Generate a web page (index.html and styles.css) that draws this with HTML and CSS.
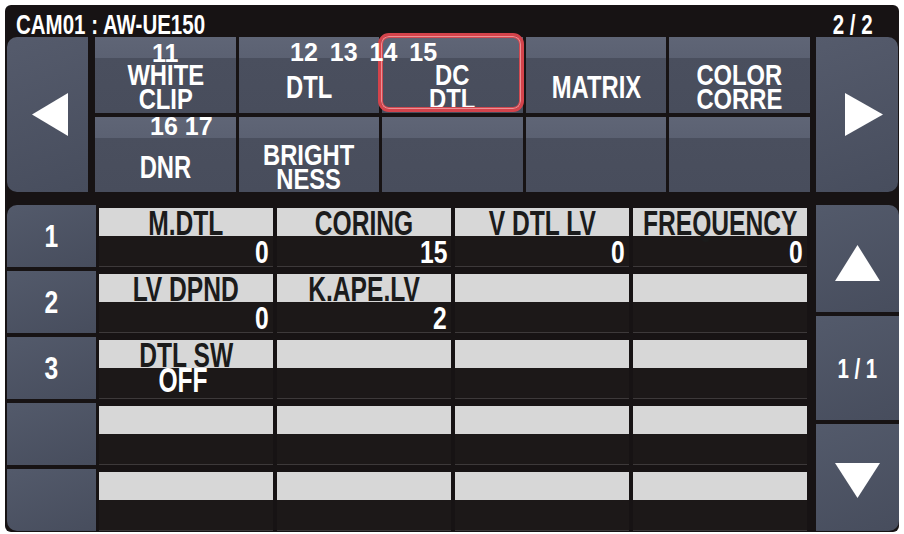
FILE: index.html
```html
<!DOCTYPE html>
<html lang="en">
<head>
    <meta charset="UTF-8">
    <title>CAM01 : AW-UE150</title>
    <link rel="stylesheet" href="styles.css">
</head>
<body>
    <div class="screen">
        <div class="topbar">
            <span class="t cam">CAM01 : AW-UE150</span>
            <span class="t page">2 / 2</span>
        </div>

        <div class="menu">
            <div class="nav nav-left">
                <svg width="36" height="43" viewBox="0 0 36 43"><polygon points="0,21.5 36,0 36,43" fill="#fff"/></svg>
            </div>
            <div class="menu-grid">
                <div class="mbtn"><div class="mlabel two"><span class="t">WHITE<br>CLIP</span></div></div>
                <div class="mbtn"><div class="mlabel"><span class="t">DTL</span></div></div>
                <div class="mbtn sel"><div class="mlabel two"><span class="t">DC<br>DTL</span></div></div>
                <div class="mbtn"><div class="mlabel"><span class="t">MATRIX</span></div></div>
                <div class="mbtn"><div class="mlabel two"><span class="t">COLOR<br>CORRE</span></div></div>
                <div class="mbtn"><div class="mlabel"><span class="t">DNR</span></div></div>
                <div class="mbtn"><div class="mlabel two"><span class="t">BRIGHT<br>NESS</span></div></div>
                <div class="mbtn"></div>
                <div class="mbtn"></div>
                <div class="mbtn"></div>
            </div>
            <div class="nav nav-right">
                <svg width="38" height="43" viewBox="0 0 38 43"><polygon points="0,0 38,21.5 0,43" fill="#fff"/></svg>
            </div>

            <!-- callout numbers -->
            <span class="callout c11">11</span>
            <span class="callout c12">12 13 14 15</span>
            <span class="callout c16">16 17</span>
        </div>

        <div class="table">
            <div class="rownums">
                <div class="rownum"><span class="t">1</span></div>
                <div class="rownum"><span class="t">2</span></div>
                <div class="rownum"><span class="t">3</span></div>
                <div class="rownum"></div>
                <div class="rownum"></div>
            </div>

            <div class="cells" id="cells"></div>

            <div class="pager">
                <div class="pbtn up">
                    <svg width="45" height="36" viewBox="0 0 45 36"><polygon points="22.5,0 45,36 0,36" fill="#fff"/></svg>
                </div>
                <div class="pbtn count"><span class="t">1 / 1</span></div>
                <div class="pbtn down">
                    <svg width="45" height="35" viewBox="0 0 45 35"><polygon points="0,0 45,0 22.5,35" fill="#fff"/></svg>
                </div>
            </div>
        </div>
    </div>

    <script>
        // parameter rows: [label, value, align]
        const rows = [
            [['M.DTL', '0'], ['CORING', '15'], ['V DTL LV', '0'], ['FREQUENCY', '0']],
            [['LV DPND', '0'], ['K.APE.LV', '2'], null, null],
            [['DTL SW', 'OFF', 'center'], null, null, null],
            [null, null, null, null],
            [null, null, null, null]
        ];

        const cells = document.getElementById('cells');
        rows.forEach(row => {
            const r = document.createElement('div');
            r.className = 'row';
            row.forEach(item => {
                const c = document.createElement('div');
                c.className = 'cell';
                const label = item ? `<span class="t">${item[0]}</span>` : '';
                const value = item ? `<span class="t">${item[1]}</span>` : '';
                const align = item && item[2] === 'center' ? ' center' : '';
                c.innerHTML = `<div class="lbl">${label}</div><div class="val${align}">${value}</div>`;
                r.appendChild(c);
            });
            cells.appendChild(r);
        });
    </script>
</body>
</html>
```

FILE: styles.css
```css
body {
    margin: 0;
    background: #fff;
    font-family: "Liberation Sans", Arial, sans-serif;
    font-weight: bold;
}
.screen {
    position: relative;
    margin: 5px 0 0 5px;
    width: 894px;
    height: 527px;
    background: #171314;
    border-radius: 6px;
    overflow: hidden;
}
/* narrow, tall lettering like the camera panel font */
.t {
    display: inline-block;
    white-space: nowrap;
    transform: scale(0.82, 1.07);
    transform-origin: center;
}
.topbar {
    height: 32px;
    display: flex;
    justify-content: space-between;
    align-items: flex-end;
    padding: 0 26px 0 11px;
    color: #fff;
    font-size: 25px;
    line-height: 24px;
}
.topbar .t {
    transform: scale(0.82, 1.08);
}
.topbar .cam {
    transform-origin: left 83%;
}
.topbar .page {
    transform-origin: right 83%;
}

/* menu */
.menu {
    position: relative;
    display: flex;
    height: 155px;
    padding-left: 2px;
}
.nav {
    width: 81px;
    background: linear-gradient(160deg, #555b6c, #474d5d);
    display: flex;
    align-items: center;
    justify-content: center;
}
.nav-left {
    border-radius: 10px 0 0 10px;
    padding-left: 5px;
    box-sizing: border-box;
}
.nav-right {
    width: 82px;
    margin-left: 6px;
    border-radius: 0 10px 10px 0;
    padding-left: 14px;
    box-sizing: border-box;
}
.menu-grid {
    margin-left: 7px;
    width: 715px;
    display: grid;
    grid-template-columns: repeat(5, 1fr);
    grid-template-rows: 76px 75px;
    gap: 4px 3px;
}
.mbtn {
    position: relative;
    display: flex;
    flex-direction: column;
    padding-top: 21px;
    background: linear-gradient(#5f6576 0, #5b6172 21px, #4a4f5e 21px, #484d5c 100%);
    color: #fff;
}
.mlabel {
    flex: 1;
    display: flex;
    align-items: center;
    justify-content: center;
    text-align: center;
    padding-top: 3px;
    font-size: 29px;
    line-height: 26px;
}
.mlabel .t {
    transform: scale(0.82, 1.1);
}
.mlabel.two {
    line-height: 23px;
}
.mlabel.two .t {
    transform: scale(0.82, 1.03);
}
.mbtn.sel::after {
    content: "";
    position: absolute;
    top: -4px;
    left: -4px;
    right: -1px;
    bottom: 1px;
    border: 3px solid #d4434b;
    border-radius: 11px;
    box-shadow: inset 0 0 0 1px #ec9094, inset 0 0 0 2px #d24850;
}
.callout {
    position: absolute;
    font-size: 25px;
    line-height: 24px;
    color: #fff;
    word-spacing: 5px;
}
.c11 { top: 4px; left: 147px; }
.c12 { top: 3px; left: 285px; }
.c16 { top: 77px; left: 145px; word-spacing: 0; }

/* parameter table */
.table {
    display: flex;
    margin-top: 13px;
    height: 326px;
    padding-left: 2px;
}
.rownums {
    width: 89px;
    display: grid;
    grid-template-rows: repeat(5, 62px);
    gap: 4px;
}
.rownum {
    background: linear-gradient(160deg, #535a6b, #474d5d);
    color: #fff;
    display: flex;
    align-items: center;
    justify-content: center;
    font-size: 30px;
    line-height: 30px;
}
.rownum:first-child {
    border-top-left-radius: 10px;
}
.rownum:last-child {
    border-bottom-left-radius: 10px;
}
.cells {
    margin-left: 3px;
    width: 708px;
    display: grid;
    grid-template-rows: repeat(5, 62px);
    gap: 4px;
}
.row {
    display: grid;
    grid-template-columns: repeat(4, 1fr);
    gap: 4px;
    padding-top: 3px;
}
.cell {
    display: flex;
    flex-direction: column;
    min-width: 0;
}
.lbl {
    height: 28px;
    display: flex;
    justify-content: center;
    align-items: flex-start;
    background: #d7d7d7;
    color: #1b1b1b;
    font-size: 30px;
}
.lbl .t {
    line-height: 34px;
    transform: scale(0.82, 1.17);
    transform-origin: 50% 80.6%;
}
.val {
    height: 31px;
    box-sizing: border-box;
    background: #1c1818;
    border-bottom: 1px solid #3d393a;
    color: #fff;
    text-align: right;
    padding: 2px 4px 0 0;
    font-size: 30px;
    line-height: 28px;
}
.val .t {
    line-height: 30px;
    transform-origin: right 85%;
}
.val.center {
    text-align: center;
    padding: 0 7px 0 0;
}
.val.center .t {
    margin-top: -2px;
    transform: scale(0.82, 1.16);
    transform-origin: center 85%;
}
.pager {
    margin-left: 9px;
    width: 83px;
    display: grid;
    grid-template-rows: 107px 104px 107px;
    gap: 4px;
}
.pbtn {
    background: linear-gradient(160deg, #535a6b, #474d5d);
    color: #fff;
    display: flex;
    align-items: center;
    justify-content: center;
    font-size: 25px;
}
.pbtn.up {
    border-top-right-radius: 10px;
    padding-top: 9px;
}
.pbtn.down {
    border-bottom-right-radius: 10px;
    padding-top: 6px;
}
```
